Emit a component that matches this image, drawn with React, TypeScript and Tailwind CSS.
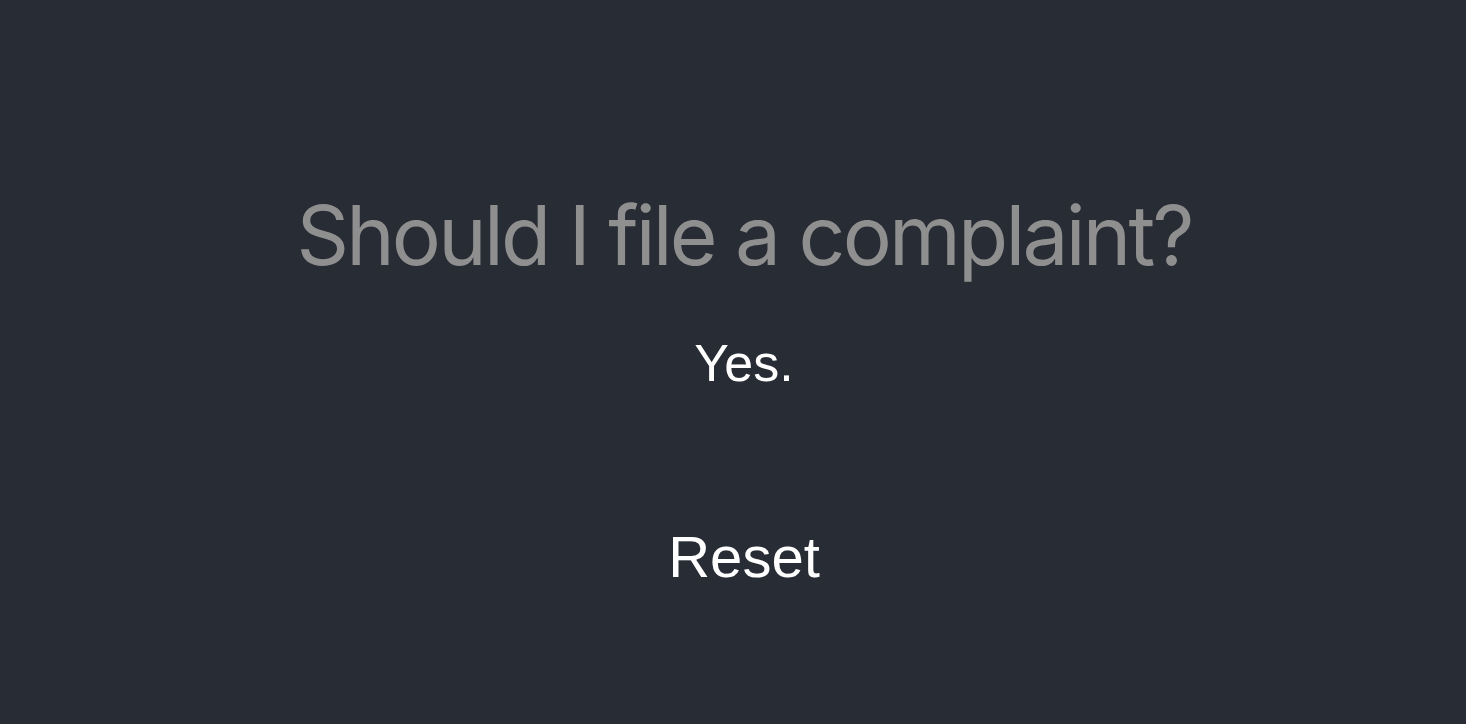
export default function App() {
  return (
    <div className="min-h-screen bg-[#282c34] flex flex-col items-center pt-[185px] pl-[22px]">
      <h1 className="text-[82px] leading-none font-normal text-[#8f8f8f] font-['Inter',sans-serif] tracking-[-2.8px] py-[10px]">
        Should I file a complaint?
      </h1>
      <p className="mt-[50px] text-[52px] leading-none text-white font-['Liberation_Sans',Arial,sans-serif]">
        Yes.
      </p>
      <button className="mt-[139px] text-[58px] leading-none text-white font-['Liberation_Sans',Arial,sans-serif] bg-transparent">
        Reset
      </button>
    </div>
  );
}
